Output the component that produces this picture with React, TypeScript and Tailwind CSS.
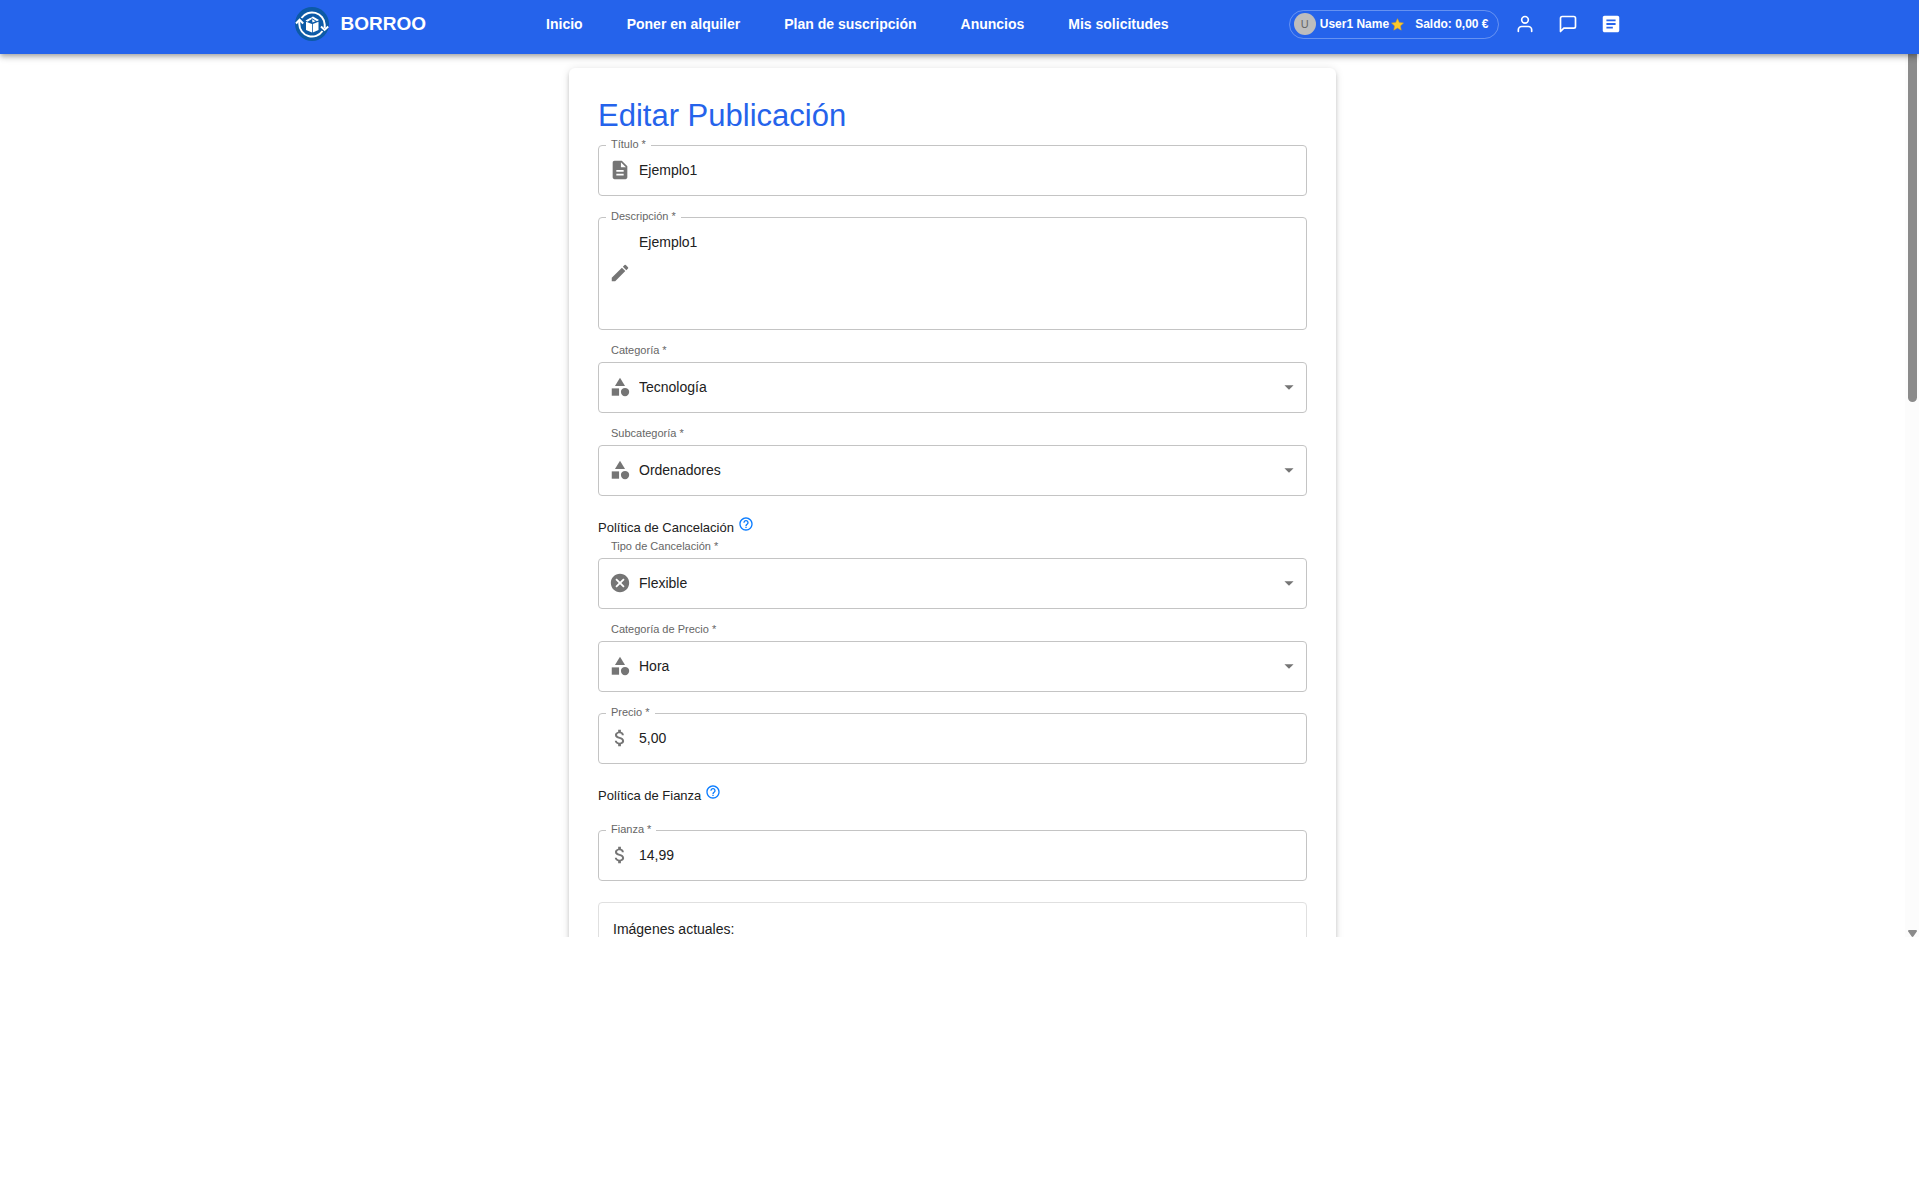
import React, { useState } from "react";
import type { ReactNode } from "react";
import {
  MdArrowDropDown,
  MdArticle,
  MdAttachMoney,
  MdCancel,
  MdCategory,
  MdDescription,
  MdEdit,
  MdHelpOutline,
} from "react-icons/md";
import { FiMessageSquare, FiUser } from "react-icons/fi";

const navLinks = ["Inicio", "Poner en alquiler", "Plan de suscripción", "Anuncios", "Mis solicitudes"];

function Logo() {
  return (
    <svg viewBox="0 0 34 34" className="size-[34px]" aria-hidden="true">
      <circle cx="17" cy="17" r="17" fill="#0c5aa6" />
      <g fill="none" stroke="#fff" strokeWidth="2">
        <path d="M6.500 11A12.700 12.700 0 0 1 29.700 17.500V21" />
        <path d="M27.500 24A12.700 12.700 0 0 1 4.300 17V13.500" />
        <path d="M1 16.500l3.600-3.700 3.600 3.700" />
        <path d="M26 19.500l3.600 3.400 3.600-3.400" />
      </g>
      <path d="M11 14.800l6 2.200v8.500L11 23zM23.500 14.800L17.800 17v8.500l5.700-2.500z" fill="#fff" />
      <path d="M10.500 13.600l5-2.800 1.800 1-4.800 3zM16 10.500l2-1 6 3.500-2 1.300zM17.500 15.600l3-1.300-3.500-2" fill="#fff" />
    </svg>
  );
}

function Header() {
  return (
    <header className="relative z-10 h-[54px] shrink-0 bg-[#2563eb] text-white shadow-[0_2px_4px_-1px_rgba(0,0,0,0.2),0_4px_5px_rgba(0,0,0,0.14),0_1px_10px_rgba(0,0,0,0.12)]">
      <div className="mx-auto flex h-12 max-w-[1336px] items-center justify-between pl-[3px]">
        <a href="#inicio" className="flex items-center gap-3 text-[19px] leading-6 font-bold">
          <Logo />
          BORROO
        </a>
        <nav className="flex gap-11 text-sm font-semibold">
          {navLinks.map((link) => (
            <a key={link} href="#seccion" className="whitespace-nowrap">
              {link}
            </a>
          ))}
        </nav>
        <div className="flex items-center gap-[9px]">
          <div className="flex h-[29px] items-center rounded-full border border-white/30 pr-[9px] pl-1 font-semibold whitespace-nowrap">
            <span className="mr-1 flex size-[22px] items-center justify-center rounded-full bg-[#bdbdbd] text-[11px] font-normal text-[#666]">
              U
            </span>
            <span className="text-[12px]">User1 Name</span>
            <svg viewBox="0 0 24 24" className="mr-[11px] ml-[2px] size-[13px]" aria-label="Estrella">
              <path
                d="M12 1.200l3.300 7.200 7.800.9-5.800 5.300 1.600 7.800L12 18.500l-6.900 3.900 1.600-7.800L.9 9.300l7.800-.9z"
                fill="#fcc92b"
                stroke="#d9a01f"
                strokeWidth="1"
              />
            </svg>
            <span className="text-[12px]">Saldo: 0,00 €</span>
          </div>
          <button type="button" aria-label="Perfil" className="flex size-[34px] items-center justify-center">
            <FiUser size={20} />
          </button>
          <button type="button" aria-label="Mensajes" className="flex size-[34px] items-center justify-center">
            <FiMessageSquare size={20} />
          </button>
          <button type="button" aria-label="Solicitudes" className="flex size-[34px] items-center justify-center">
            <MdArticle size={22} />
          </button>
        </div>
      </div>
    </header>
  );
}

interface FieldProps {
  id: string;
  label: string;
  value: string;
  icon: ReactNode;
  multiline?: boolean;
}

function TextField({ id, label, value, icon, multiline }: FieldProps) {
  const [text, setText] = useState(value);
  return (
    <div
      className={`relative flex items-center gap-2 rounded border border-[#c4c4c4] pr-3 pb-[2px] pl-[10px] text-[#757575] ${
        multiline ? "h-[113px]" : "h-[51px]"
      }`}
    >
      <label htmlFor={id} className="absolute -top-[9px] left-[7px] bg-white px-[5px] text-[11px] leading-[14px] text-[#666]">
        {label} *
      </label>
      {icon}
      {multiline ? (
        <textarea
          id={id}
          rows={4}
          value={text}
          onChange={(e) => setText(e.target.value)}
          className="min-w-0 grow resize-none pt-[2px] text-sm leading-[21px] text-[#212121] outline-none"
        />
      ) : (
        <input
          id={id}
          value={text}
          onChange={(e) => setText(e.target.value)}
          className="min-w-0 grow text-sm text-[#212121] outline-none"
        />
      )}
    </div>
  );
}

function SelectField({ id, label, value, icon }: FieldProps) {
  return (
    <div>
      <label htmlFor={id} className="mb-[5px] block pl-[13px] text-[11px] leading-[14px] text-[#666]">
        {label} *
      </label>
      <div className="flex h-[51px] items-center gap-2 rounded border border-[#c4c4c4] pr-[6px] pb-[2px] pl-[10px] text-[#757575]">
        {icon}
        <select id={id} defaultValue={value} className="min-w-0 grow appearance-none text-sm text-[#212121] outline-none">
          <option>{value}</option>
        </select>
        <MdArrowDropDown size={22} className="shrink-0" />
      </div>
    </div>
  );
}

function PolicyHeading({ children }: { children: ReactNode }) {
  return (
    <div className="mt-5 flex h-[23px] items-center gap-1">
      <h2 className="text-[13px] text-[#212121]">{children}</h2>
      <button type="button" aria-label="Ayuda" className="mb-2 text-[#0a7cff]">
        <MdHelpOutline size={16} />
      </button>
    </div>
  );
}

export default function App() {
  return (
    <div className="min-h-screen bg-white font-['Liberation_Sans',Arial,sans-serif]">
      <div className="flex h-[79.35vh] flex-col overflow-hidden">
        <Header />
        <div className="flex min-h-0 grow">
          <main className="min-w-0 grow overflow-hidden pt-[14px]">
            <form className="mx-auto flex max-w-[767px] flex-col rounded-md bg-white px-[29px] pt-[30px] pb-8 shadow-[0_3px_3px_-2px_rgba(0,0,0,0.2),0_3px_4px_rgba(0,0,0,0.14),0_1px_8px_rgba(0,0,0,0.12)]">
              <h1 className="mb-[11px] text-[31px] leading-9 text-[#2563eb]">Editar Publicación</h1>
              <div className="flex flex-col gap-[21px]">
                <TextField id="titulo" label="Título" value="Ejemplo1" icon={<MdDescription size={22} className="shrink-0" />} />
                <TextField id="descripcion" label="Descripción" value="Ejemplo1" multiline icon={<MdEdit size={22} className="shrink-0" />} />
              </div>
              <div className="mt-[13px] flex flex-col gap-[13px]">
                <SelectField id="categoria" label="Categoría" value="Tecnología" icon={<MdCategory size={22} className="shrink-0" />} />
                <SelectField id="subcategoria" label="Subcategoría" value="Ordenadores" icon={<MdCategory size={22} className="shrink-0" />} />
              </div>
              <PolicyHeading>Política de Cancelación</PolicyHeading>
              <div className="flex flex-col gap-[13px]">
                <SelectField id="cancelacion" label="Tipo de Cancelación" value="Flexible" icon={<MdCancel size={22} className="shrink-0" />} />
                <SelectField id="categoria-precio" label="Categoría de Precio" value="Hora" icon={<MdCategory size={22} className="shrink-0" />} />
              </div>
              <div className="mt-[21px]">
                <TextField id="precio" label="Precio" value="5,00" icon={<MdAttachMoney size={22} className="shrink-0" />} />
              </div>
              <PolicyHeading>Política de Fianza</PolicyHeading>
              <div className="mt-[23px]">
                <TextField id="fianza" label="Fianza" value="14,99" icon={<MdAttachMoney size={22} className="shrink-0" />} />
              </div>
              <section className="mt-[21px] min-h-40 rounded border border-[#e0e0e0] px-[14px] py-4">
                <h3 className="text-sm text-[#212121]">Imágenes actuales:</h3>
              </section>
            </form>
          </main>
          <div className="flex w-[14px] shrink-0 flex-col items-end justify-between bg-[#fcfcfc] pr-[2px]" aria-hidden="true">
            <div className="h-[39.400%] w-[9px] rounded-b-full bg-[#8b8b8b]" />
            <svg viewBox="0 0 9 7" className="h-[7px] w-[9px]">
              <path d="M1 0h7a1 1 0 0 1 .8 1.600L5.500 6.200a1.200 1.200 0 0 1-2 0L.2 1.600A1 1 0 0 1 1 0z" fill="#8b8b8b" />
            </svg>
          </div>
        </div>
      </div>
    </div>
  );
}
